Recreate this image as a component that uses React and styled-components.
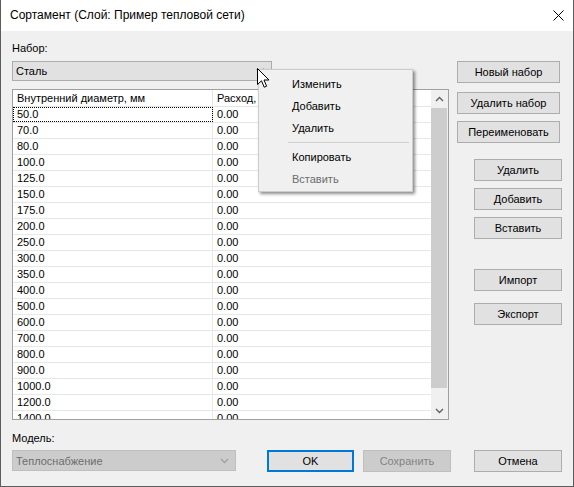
import React from 'react';
import styled, { createGlobalStyle } from 'styled-components';

const GlobalStyle = createGlobalStyle`
  html, body {
    margin: 0;
    padding: 0;
    background: #ffffff;
  }
  body {
    font-family: "Liberation Sans", Arial, sans-serif;
    font-size: 11px;
    color: #000;
  }
  * {
    box-sizing: border-box;
  }
`;

const Window = styled.div`
  position: relative;
  width: 574px;
  height: 487px;
  display: flex;
  flex-direction: column;
  background: #f0f0f0;
  border: 1px solid #5c5c5c;
  border-top: none;
  overflow: hidden;
`;

const TitleBar = styled.div`
  flex: none;
  height: 31px;
  display: flex;
  align-items: center;
  justify-content: space-between;
  padding: 0 9px 0 9px;
  background: #ffffff;
`;

const Title = styled.div`
  font-size: 12px;
  line-height: 16px;
  padding-bottom: 1px;
`;

const Body = styled.div`
  flex: 1;
  display: flex;
  flex-direction: column;
  padding: 0 11px;
`;

const TopSection = styled.div`
  display: flex;
  gap: 8px;
`;

const LeftColumn = styled.div`
  width: 438px;
  display: flex;
  flex-direction: column;
`;

const RightColumn = styled.div`
  display: flex;
  flex-direction: column;
  padding-top: 30px;
`;

const Label = styled.div`
  margin-top: ${(p) => p.$top}px;
  line-height: 15px;
`;

const Combo = styled.div`
  margin-top: ${(p) => p.$top || 0}px;
  width: ${(p) => p.$width}px;
  height: ${(p) => p.$height}px;
  display: flex;
  align-items: center;
  justify-content: space-between;
  padding: 0 6px 0 3px;
  background: ${(p) => (p.$disabled ? '#cccccc' : '#e1e1e1')};
  border: 1px solid ${(p) => (p.$disabled ? '#bfbfbf' : '#adadad')};
  color: ${(p) => (p.$disabled ? '#6d6d6d' : '#000')};
`;

const Table = styled.div`
  margin-top: 8px;
  height: 331px;
  display: flex;
  background: #ffffff;
  border: 1px solid #a0a0a0;
  overflow: hidden;
`;

const DataArea = styled.div`
  flex: 1;
  display: flex;
  flex-direction: column;
  overflow: hidden;
`;

const HeaderRow = styled.div`
  flex: none;
  height: 17px;
  display: flex;
  border-bottom: 1px solid #e5e5e5;
`;

const HeaderCell = styled.div`
  width: ${(p) => (p.$first ? '200px' : 'auto')};
  flex: ${(p) => (p.$first ? 'none' : '1')};
  padding-left: 4px;
  line-height: 16px;
  white-space: nowrap;
  border-right: ${(p) => (p.$first ? '1px solid #e5e5e5' : 'none')};
`;

const Row = styled.div`
  flex: none;
  height: 16px;
  display: flex;
  border-bottom: 1px solid #e8e8e8;
`;

const Cell = styled.div`
  width: ${(p) => (p.$first ? '200px' : 'auto')};
  flex: ${(p) => (p.$first ? 'none' : '1')};
  padding-left: 4px;
  line-height: 15px;
  white-space: nowrap;
  border-right: ${(p) => (p.$first ? '1px solid #e8e8e8' : 'none')};
  outline: ${(p) => (p.$focused ? '1px dotted #000' : 'none')};
  outline-offset: -1px;
`;

const Scrollbar = styled.div`
  flex: none;
  width: 17px;
  display: flex;
  flex-direction: column;
  background: #f0f0f0;
`;

const ScrollButton = styled.div`
  flex: none;
  height: 17px;
  display: flex;
  align-items: center;
  justify-content: center;
`;

const Thumb = styled.div`
  flex: none;
  height: 280px;
  margin: 1px 1px 0 0;
  background: #cdcdcd;
`;

const Track = styled.div`
  flex: 1;
`;

const Button = styled.div`
  flex: none;
  margin-top: ${(p) => p.$top || 0}px;
  margin-left: ${(p) => p.$left || 0}px;
  width: ${(p) => p.$width}px;
  height: 22px;
  display: flex;
  align-items: center;
  justify-content: center;
  background: ${(p) => (p.$disabled ? '#cccccc' : '#e1e1e1')};
  border: ${(p) =>
    p.$default ? '2px solid #0078d7' : `1px solid ${p.$disabled ? '#bfbfbf' : '#adadad'}`};
  color: ${(p) => (p.$disabled ? '#838383' : '#000')};
  white-space: nowrap;
`;

const BottomRow = styled.div`
  margin-top: 4px;
  display: flex;
  align-items: flex-start;
`;

const Menu = styled.div`
  position: absolute;
  left: 257px;
  top: 69px;
  width: 155px;
  height: 123px;
  padding: 3px 0;
  background: #f0f0f0;
  border: 1px solid #cccccc;
  box-shadow: 2px 2px 3px rgba(0, 0, 0, 0.45);
`;

const MenuItem = styled.div`
  height: 22px;
  line-height: 22px;
  padding-left: 33px;
  color: ${(p) => (p.$disabled ? '#6d6d6d' : '#000')};
`;

const MenuSeparator = styled.div`
  height: 1px;
  margin: 3px 3px 3px 29px;
  background: #d0d0d0;
`;

const Cursor = styled.svg`
  position: absolute;
  left: 256px;
  top: 68px;
`;

const Chevron = ({ up, color = '#606060' }) => (
  <svg width="9" height="6" viewBox="0 0 9 6">
    <path
      d={up ? 'M1 5 L4.5 1.5 L8 5' : 'M1 1 L4.5 4.5 L8 1'}
      fill="none"
      stroke={color}
      strokeWidth="1.4"
    />
  </svg>
);

const CloseIcon = () => (
  <svg width="11" height="11" viewBox="0 0 11 11">
    <path d="M0.5 0.5 L10.5 10.5 M10.5 0.5 L0.5 10.5" stroke="#000" strokeWidth="1" />
  </svg>
);

const diameters = [
  '50.0', '70.0', '80.0', '100.0', '125.0', '150.0', '175.0', '200.0', '250.0', '300.0',
  '350.0', '400.0', '500.0', '600.0', '700.0', '800.0', '900.0', '1000.0', '1200.0', '1400.0',
];

export default function App() {
  return (
    <>
      <GlobalStyle />
      <Window>
        <TitleBar>
          <Title>Сортамент (Слой: Пример тепловой сети)</Title>
          <CloseIcon />
        </TitleBar>
        <Body>
          <TopSection>
            <LeftColumn>
              <Label $top={10}>Набор:</Label>
              <Combo $top={5} $width={260} $height={20}>
                <span>Сталь</span>
                <Chevron color="#333" />
              </Combo>
              <Table>
                <DataArea>
                  <HeaderRow>
                    <HeaderCell $first>Внутренний диаметр, мм</HeaderCell>
                    <HeaderCell>Расход, т/ч</HeaderCell>
                  </HeaderRow>
                  {diameters.map((d, i) => (
                    <Row key={d}>
                      <Cell $first $focused={i === 0}>{d}</Cell>
                      <Cell>0.00</Cell>
                    </Row>
                  ))}
                </DataArea>
                <Scrollbar>
                  <ScrollButton>
                    <Chevron up />
                  </ScrollButton>
                  <Thumb />
                  <Track />
                  <ScrollButton>
                    <Chevron />
                  </ScrollButton>
                </Scrollbar>
              </Table>
            </LeftColumn>
            <RightColumn>
              <Button $width={103}>Новый набор</Button>
              <Button $width={103} $top={9}>Удалить набор</Button>
              <Button $width={103} $top={7}>Переименовать</Button>
              <Button $width={88} $left={17} $top={16}>Удалить</Button>
              <Button $width={88} $left={17} $top={7}>Добавить</Button>
              <Button $width={88} $left={17} $top={7}>Вставить</Button>
              <Button $width={88} $left={17} $top={30}>Импорт</Button>
              <Button $width={88} $left={17} $top={12}>Экспорт</Button>
            </RightColumn>
          </TopSection>
          <Label $top={11}>Модель:</Label>
          <BottomRow>
            <Combo $width={225} $height={21} $disabled>
              <span>Теплоснабжение</span>
              <Chevron color="#a0a0a0" />
            </Combo>
            <Button $width={87} $left={31} $default>OK</Button>
            <Button $width={88} $left={9} $disabled>Сохранить</Button>
            <Button $width={88} $left={23}>Отмена</Button>
          </BottomRow>
        </Body>
        <Menu>
          <MenuItem>Изменить</MenuItem>
          <MenuItem>Добавить</MenuItem>
          <MenuItem>Удалить</MenuItem>
          <MenuSeparator />
          <MenuItem>Копировать</MenuItem>
          <MenuItem $disabled>Вставить</MenuItem>
        </Menu>
        <Cursor width="13" height="21" viewBox="0 0 13 21">
          <path
            d="M0.5 0.5 L0.5 16.5 L4.5 12.8 L7.2 19.2 L9.6 18.2 L7 12 L12 12 Z"
            fill="#fff"
            stroke="#000"
            strokeWidth="1"
          />
        </Cursor>
      </Window>
    </>
  );
}
